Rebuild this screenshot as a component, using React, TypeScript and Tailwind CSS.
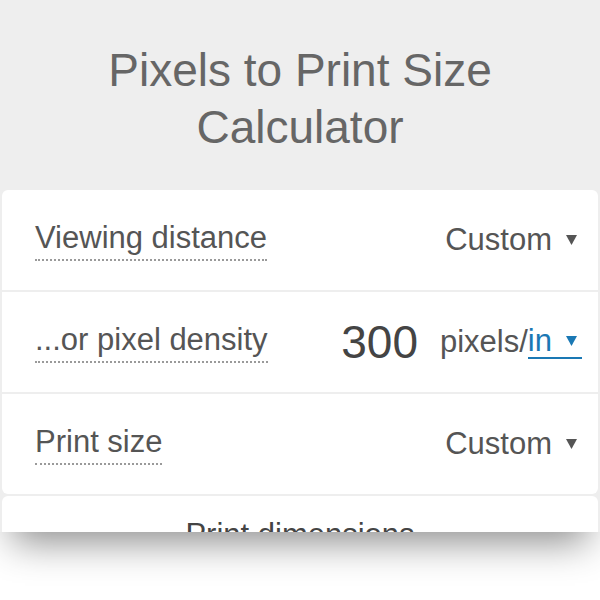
const Caret = ({ color = '#555' }: { color?: string }) => (
  <svg width="11" height="10" viewBox="0 0 11 10" className="shrink-0">
    <path d="M0 0 H11 L5.5 10 Z" fill={color} />
  </svg>
)

const Label = ({ children }: { children: string }) => (
  <span className="border-b-2 border-dotted border-[#9a9a9a] pb-[3px] leading-[36px] text-[31px] text-[#555]">
    {children}
  </span>
)

const Select = ({ value }: { value: string }) => (
  <div className="flex items-center gap-[14px] text-[31px] leading-[36px] text-[#555]">
    <span>{value}</span>
    <Caret />
  </div>
)

export default function App() {
  return (
    <div className="w-[600px] h-[600px] bg-white" style={{ fontFamily: '"Liberation Sans", Arial, sans-serif' }}>
      <div className="h-[532px] overflow-hidden bg-[#eeeeee] flex flex-col shadow-[0_22px_36px_-12px_rgba(0,0,0,0.45)]">
        <header className="h-[190px] shrink-0 flex items-center justify-center pt-[8px] text-center text-[46px] leading-[57px] text-[#666]">
          Pixels to Print Size
          <br />
          Calculator
        </header>

        <div className="mx-[2px] shrink-0 rounded-[6px] bg-white flex flex-col">
          <div className="h-[100px] flex items-center justify-between pl-[33px] pr-[21px]">
            <Label>Viewing distance</Label>
            <Select value="Custom" />
          </div>

          <div className="h-[102px] border-t-2 border-[#eeeeee] flex items-center justify-between pl-[33px] pr-[16px]">
            <Label>...or pixel density</Label>
            <div className="flex items-center">
              <span className="text-[46px] leading-[50px] text-[#444]">300</span>
              <span className="ml-[22px] text-[31px] leading-[36px] text-[#555]">pixels/</span>
              <span className="flex items-center gap-[14px] border-b-2 border-[#1a78b4] pr-[5px] text-[31px] leading-[32px] text-[#1a78b4]">
                <span>in</span>
                <Caret color="#1a78b4" />
              </span>
            </div>
          </div>

          <div className="h-[102px] border-t-2 border-[#eeeeee] flex items-center justify-between pl-[33px] pr-[21px]">
            <Label>Print size</Label>
            <Select value="Custom" />
          </div>
        </div>

        <div className="mx-[2px] mt-[2px] rounded-t-[6px] bg-white pt-[21px] text-center text-[31px] leading-[36px] text-[#444] h-[120px] shrink-0">
          Print dimensions
        </div>
      </div>
    </div>
  )
}
